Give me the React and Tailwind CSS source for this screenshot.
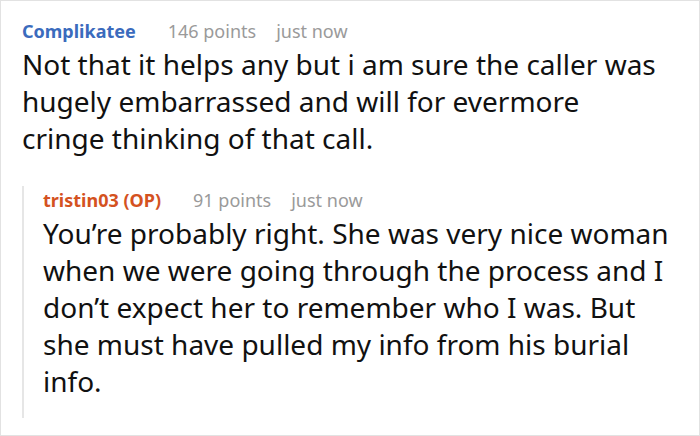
import React from "react";

const font = { fontFamily: '"Noto Sans", "Open Sans", sans-serif' };

const Meta = ({ name, nameColor, points }) => (
  <div className="flex items-baseline text-[18px] leading-[24px]">
    <span className={`font-bold ${nameColor}`}>{name}</span>
    <span className="ml-8 text-[#9a9a9a]">{points} points</span>
    <span className="ml-5 text-[#9a9a9a]">just now</span>
  </div>
);

export default function App() {
  return (
    <div
      className="w-[700px] h-[436px] bg-white border border-[#e2e2e2] text-[#111] overflow-hidden"
      style={font}
    >
      <div className="pl-[21px] pt-[18px]">
        <Meta name="Complikatee" nameColor="text-[#3b6bbd]" points="146" />
        <p className="mt-[3px] text-[28px] leading-[37px] w-[640px]">
          Not that it helps any but i am sure the caller was hugely
          embarrassed and will for evermore cringe thinking of that call.
        </p>
        <div className="mt-[29px] border-l-2 border-[#e6e6e6] pl-[19px] pt-[2px] pb-[18px]">
          <Meta name="tristin03 (OP)" nameColor="text-[#d4521f]" points="91" />
          <p className="mt-[3px] text-[28px] leading-[37px] w-[630px]">
            You’re probably right. She was very nice woman when we were going
            through the process and I don’t expect her to remember who I was.
            But she must have pulled my info from his burial info.
          </p>
        </div>
      </div>
    </div>
  );
}
